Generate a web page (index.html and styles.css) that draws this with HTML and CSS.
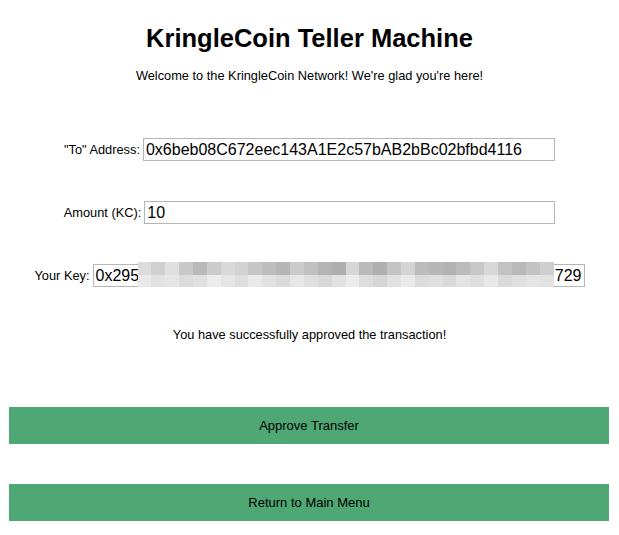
FILE: index.html
```html
<!DOCTYPE html>
<html>
<head>
<meta charset="utf-8">
<link rel="stylesheet" href="styles.css">
</head>
<body>
<h1 class="title">KringleCoin Teller Machine</h1>
<p class="welcome">Welcome to the KringleCoin Network! We're glad you're here!</p>
<div class="form">
  <div class="row row-to">
    <label class="label">"To" Address:</label>
    <input class="field field-to" type="text" value="0x6beb08C672eec143A1E2c57bAB2bBc02bfbd4116">
  </div>
  <div class="row row-amount">
    <label class="label">Amount (KC):</label>
    <input class="field field-amount" type="text" value="10">
  </div>
  <div class="row row-key">
    <label class="label">Your Key:</label>
    <div class="key-wrap">
      <div class="field field-key"><span>0x295</span><span>729</span></div>
      <div class="mosaic">
        <i style="background:#dcdcdc"></i><i style="background:#d0d0d0"></i><i style="background:#e0e0e0"></i><i style="background:#c8c8c8"></i><i style="background:#b9b9b9"></i><i style="background:#cccccc"></i><i style="background:#d9d9d9"></i><i style="background:#d2d2d2"></i><i style="background:#c6c6c6"></i><i style="background:#bdbdbd"></i><i style="background:#b5b5b5"></i><i style="background:#cbcbcb"></i><i style="background:#c0c0c0"></i><i style="background:#b4b4b4"></i><i style="background:#aeaeae"></i><i style="background:#d6d6d6"></i><i style="background:#bababa"></i><i style="background:#b0b0b0"></i><i style="background:#c4c4c4"></i><i style="background:#d4d4d4"></i><i style="background:#bcbcbc"></i><i style="background:#b7b7b7"></i><i style="background:#b2b2b2"></i><i style="background:#bbbbbb"></i><i style="background:#c7c7c7"></i><i style="background:#d8d8d8"></i><i style="background:#c2c2c2"></i><i style="background:#b9b9b9"></i><i style="background:#c3c3c3"></i><i style="background:#cfcfcf"></i>
        <i style="background:#e9e9e9"></i><i style="background:#e2e2e2"></i><i style="background:#e6e6e6"></i><i style="background:#dcdcdc"></i><i style="background:#e0e0e0"></i><i style="background:#ececec"></i><i style="background:#e5e5e5"></i><i style="background:#dedede"></i><i style="background:#eaeaea"></i><i style="background:#e1e1e1"></i><i style="background:#dadada"></i><i style="background:#e7e7e7"></i><i style="background:#dfdfdf"></i><i style="background:#d8d8d8"></i><i style="background:#e2e2e2"></i><i style="background:#ebebeb"></i><i style="background:#dddddd"></i><i style="background:#d6d6d6"></i><i style="background:#e1e1e1"></i><i style="background:#eaeaea"></i><i style="background:#dbdbdb"></i><i style="background:#dfdfdf"></i><i style="background:#d9d9d9"></i><i style="background:#e4e4e4"></i><i style="background:#dedede"></i><i style="background:#e8e8e8"></i><i style="background:#dadada"></i><i style="background:#e0e0e0"></i><i style="background:#e5e5e5"></i><i style="background:#e2e2e2"></i>
      </div>
    </div>
  </div>
</div>
<p class="status">You have successfully approved the transaction!</p>
<div class="actions">
  <button class="btn">Approve Transfer</button>
  <button class="btn">Return to Main Menu</button>
</div>
</body>
</html>
```

FILE: styles.css
```css
html, body {
  background: #ffffff;
}
body {
  margin: 0;
  padding: 0 9px;
  font-family: "Liberation Sans", Arial, Helvetica, sans-serif;
  color: #000;
}
.title {
  margin: 22px 0 0;
  text-align: center;
  font-size: 25.5px;
  font-weight: bold;
  line-height: 32px;
}
.welcome {
  margin: 14px 0 0;
  text-align: center;
  font-size: 12.8px;
  line-height: 16px;
}
.form {
  margin-top: 54px;
  display: flex;
  flex-direction: column;
  gap: 40px;
}
.row {
  display: flex;
  justify-content: center;
  align-items: center;
  gap: 3px;
}
.label {
  font-size: 12.8px;
}
.field {
  box-sizing: border-box;
  height: 23px;
  border: 1px solid #b5b5b5;
  font-family: "Liberation Sans", Arial, Helvetica, sans-serif;
  font-size: 16px;
  color: #000;
  padding: 0 2px;
  margin: 0;
  outline: none;
  background: #fff;
}
.field-to { width: 412px; }
.field-amount { width: 411px; }
.key-wrap {
  position: relative;
}
.field-key {
  width: 492px;
  display: flex;
  justify-content: space-between;
  align-items: center;
}
.mosaic {
  position: absolute;
  left: 45px;
  top: -2px;
  width: 416px;
  height: 25px;
  display: grid;
  grid-template-columns: repeat(30, 1fr);
  grid-template-rows: 13px 12px;
}
.mosaic i {
  display: block;
}
.status {
  margin: 40px 0 0;
  text-align: center;
  font-size: 12.8px;
  line-height: 16px;
}
.actions {
  margin-top: 64px;
  display: flex;
  flex-direction: column;
  gap: 40px;
}
.btn {
  display: block;
  width: 600px;
  height: 37px;
  border: none;
  background: #4fa874;
  color: #000;
  font-family: "Liberation Sans", Arial, Helvetica, sans-serif;
  font-size: 13px;
  padding: 0;
  margin: 0;
}
```
